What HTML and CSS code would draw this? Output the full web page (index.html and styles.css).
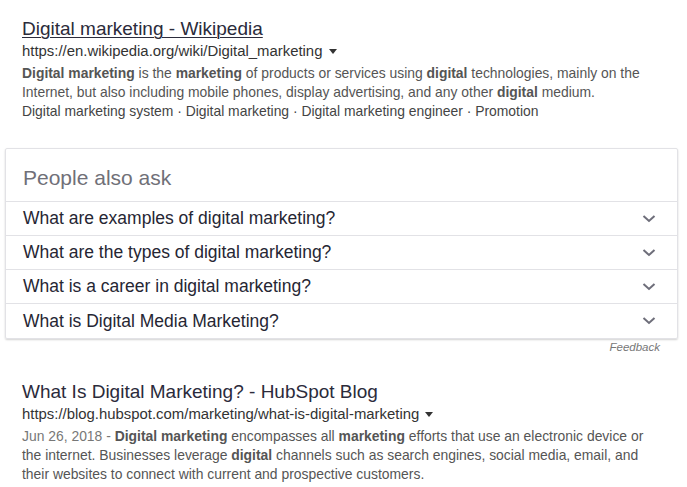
FILE: index.html
```html
<!DOCTYPE html>
<html>
<head>
<meta charset="utf-8">
<link rel="stylesheet" href="styles.css">
</head>
<body>
<div class="page">
  <div class="result">
    <a class="title underline">Digital marketing - Wikipedia</a>
    <div class="url">https://en.wikipedia.org/wiki/Digital_marketing <span class="caret"></span></div>
    <div class="snippet"><b>Digital marketing</b> is the <b>marketing</b> of products or services using <b>digital</b> technologies, mainly on the Internet, but also including mobile phones, display advertising, and any other <b>digital</b> medium.</div>
    <div class="links">Digital marketing system · Digital marketing · Digital marketing engineer · Promotion</div>
  </div>

  <div class="paa">
    <div class="paa-head">People also ask</div>
    <div class="q"><span>What are examples of digital marketing?</span><svg class="chev" viewBox="0 0 14 10" width="14" height="10"><path d="M1.5 2 L7 7 L12.5 2" fill="none" stroke="#6e6e7a" stroke-width="2"/></svg></div>
    <div class="q"><span>What are the types of digital marketing?</span><svg class="chev" viewBox="0 0 14 10" width="14" height="10"><path d="M1.5 2 L7 7 L12.5 2" fill="none" stroke="#6e6e7a" stroke-width="2"/></svg></div>
    <div class="q"><span>What is a career in digital marketing?</span><svg class="chev" viewBox="0 0 14 10" width="14" height="10"><path d="M1.5 2 L7 7 L12.5 2" fill="none" stroke="#6e6e7a" stroke-width="2"/></svg></div>
    <div class="q"><span>What is Digital Media Marketing?</span><svg class="chev" viewBox="0 0 14 10" width="14" height="10"><path d="M1.5 2 L7 7 L12.5 2" fill="none" stroke="#6e6e7a" stroke-width="2"/></svg></div>
  </div>
  <div class="feedback">Feedback</div>

  <div class="result second">
    <a class="title">What Is Digital Marketing? - HubSpot Blog</a>
    <div class="url">https://blog.hubspot.com/marketing/what-is-digital-marketing <span class="caret"></span></div>
    <div class="snippet"><span class="date">Jun 26, 2018 - </span><b>Digital marketing</b> encompasses all <b>marketing</b> efforts that use an electronic device or the internet. Businesses leverage <b>digital</b> channels such as search engines, social media, email, and their websites to connect with current and prospective customers.</div>
  </div>
</div>
</body>
</html>
```
FILE: styles.css
```css
* { box-sizing: border-box; }
html, body { margin: 0; padding: 0; background: #fff; }
body { font-family: "Liberation Sans", Arial, sans-serif; color: #333; }
.page { padding: 17px 0 0 5px; width: 678px; }
.result { padding-left: 17px; padding-right: 20px; }
.title { display: block; font-size: 19px; line-height: 24px; color: #2b2b3b; text-decoration: none; }
.title.underline { text-decoration: underline; text-decoration-thickness: 1px; text-underline-offset: 2px; }
.url { font-size: 14.9px; line-height: 21px; color: #333; }
.caret { display: inline-block; width: 0; height: 0; border-left: 4px solid transparent; border-right: 4px solid transparent; border-top: 5px solid #333; vertical-align: middle; margin-left: 2px; position: relative; top: -1px; }
.snippet { font-size: 13.9px; line-height: 19px; color: #555; margin-top: 2px; }
.snippet b { color: #555; }
.date { color: #777; }
.links { font-size: 13.9px; line-height: 19px; color: #444; }
.paa { margin-top: 27px; border: 1px solid #e2e2e6; border-radius: 2px; box-shadow: 0 1px 2px rgba(0,0,0,0.18); }
.paa-head { font-size: 21px; line-height: 46px; padding-top: 6px; color: #707078; padding-left: 17px; border-bottom: 1px solid #e2e2e6; }
.q { display: flex; align-items: center; justify-content: space-between; height: 34px; padding: 0 21px 0 17px; border-bottom: 1px solid #e2e2e6; font-size: 17.5px; color: #262633; }
.q:last-child { border-bottom: none; }
.chev { display: block; }
.feedback { text-align: right; font-size: 11.5px; font-style: italic; color: #777; padding-right: 18px; line-height: 16px; }
.second { margin-top: 25px; }
.second .snippet { margin-top: 2px; }
```
